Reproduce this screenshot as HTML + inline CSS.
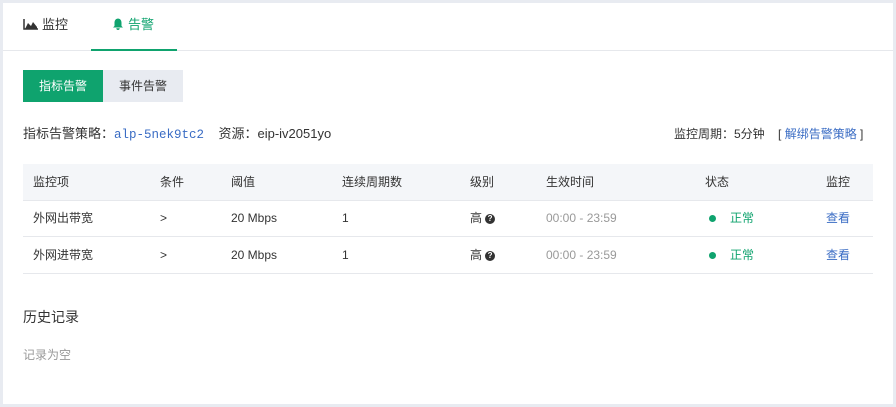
<!DOCTYPE html>
<html><head><meta charset="utf-8"><style>
*{margin:0;padding:0;box-sizing:border-box}
body{width:896px;height:407px;background:#e8ebf1;font-family:"Liberation Sans","Noto Sans CJK SC",sans-serif;font-size:12px;color:#333;position:relative;overflow:hidden}
.card{position:absolute;left:3px;top:3px;width:890px;height:401px;background:#fff}
.abs{position:absolute;white-space:nowrap;line-height:16px;height:16px}
.tabline{position:absolute;left:0;top:47px;width:890px;height:1px;background:#e6e8ec}
.ul{position:absolute;left:88px;top:46px;width:86px;height:2px;background:#0fa36e}
.btn{position:absolute;top:67px;height:32px;line-height:32px;text-align:center;font-size:12px}
.th{position:absolute;left:20px;top:161px;width:850px;height:36px;background:#f4f6f9}
.hl{position:absolute;left:20px;width:850px;height:1px;background:#e6e8ec}
.dot{display:inline-block;width:7px;height:7px;border-radius:50%;background:#0fa36e;margin-right:14px;vertical-align:middle}
.q{display:inline-block;width:10px;height:10px;border-radius:50%;background:#333;color:#fff;font-size:8px;line-height:10px;text-align:center;font-weight:bold;vertical-align:middle;margin-left:3px}
</style></head><body><div class="card">
<div class="abs" style="left:20px;top:14px;font-size:13px"><svg width="15" height="11" viewBox="0 0 15 11" style="vertical-align:-1px;margin-right:4px"><path d="M1 0V10H15" stroke="#333" fill="none" stroke-width="1.5"/><path d="M2 10L5 4L8 7L10 3L14 8V10Z" fill="#333"/></svg>监控</div>
<div class="abs" style="left:109px;top:14px;font-size:13px;color:#0fa36e"><svg width="12" height="12" viewBox="0 0 12 12" style="vertical-align:-1px;margin-right:4px"><path d="M6 0.5C3.2 0.8 2.5 3 2.5 5V8L1 9.5H11L9.5 8V5C9.5 3 8.8 0.8 6 0.5Z M4.3 10.3A1.7 1.7 0 0 0 7.7 10.3Z" fill="#0fa36e"/></svg>告警</div>
<div class="tabline"></div><div class="ul"></div>
<div class="btn" style="left:20px;width:80px;background:#0fa36e;color:#fff">指标告警</div>
<div class="btn" style="left:100px;width:80px;background:#e8ebf1;color:#333">事件告警</div>
<div class="abs" style="left:20px;top:123px;font-size:13px">指标告警策略：<span style="color:#3a6cc4;font-family:'Liberation Mono',monospace;font-size:12.5px">alp-5nek9tc2</span>&nbsp;&nbsp;&nbsp; 资源：eip-iv2051yo</div>
<div class="abs" style="left:671px;top:123px">监控周期：5分钟 &nbsp;&nbsp;&nbsp;[ <span style="color:#3a6cc4">解绑告警策略</span> ]</div>
<div class="th"></div>
<div class="hl" style="top:197px"></div><div class="hl" style="top:233px"></div><div class="hl" style="top:270px"></div>
<div class="abs" style="top:171px;left:30px">监控项</div><div class="abs" style="top:171px;left:157px">条件</div><div class="abs" style="top:171px;left:228px">阈值</div><div class="abs" style="top:171px;left:339px">连续周期数</div><div class="abs" style="top:171px;left:467px">级别</div><div class="abs" style="top:171px;left:543px">生效时间</div><div class="abs" style="top:171px;left:702px">状态</div><div class="abs" style="top:171px;left:823px">监控</div>
<div class="abs" style="top:207px;left:30px">外网出带宽</div><div class="abs" style="top:207px;left:157px">&gt;</div><div class="abs" style="top:207px;left:228px">20 Mbps</div><div class="abs" style="top:207px;left:339px">1</div><div class="abs" style="top:207px;left:467px">高<span class="q">?</span></div><div class="abs" style="top:207px;left:543px;color:#999">00:00 - 23:59</div><div class="abs" style="top:207px;left:706px;color:#0fa36e"><span class="dot"></span>正常</div><div class="abs" style="top:207px;left:823px;color:#3a6cc4">查看</div>
<div class="abs" style="top:244px;left:30px">外网进带宽</div><div class="abs" style="top:244px;left:157px">&gt;</div><div class="abs" style="top:244px;left:228px">20 Mbps</div><div class="abs" style="top:244px;left:339px">1</div><div class="abs" style="top:244px;left:467px">高<span class="q">?</span></div><div class="abs" style="top:244px;left:543px;color:#999">00:00 - 23:59</div><div class="abs" style="top:244px;left:706px;color:#0fa36e"><span class="dot"></span>正常</div><div class="abs" style="top:244px;left:823px;color:#3a6cc4">查看</div>
<div class="abs" style="left:20px;top:305px;font-size:14px;height:18px;line-height:18px">历史记录</div>
<div class="abs" style="left:20px;top:344px;color:#999">记录为空</div>
</div></body></html>
